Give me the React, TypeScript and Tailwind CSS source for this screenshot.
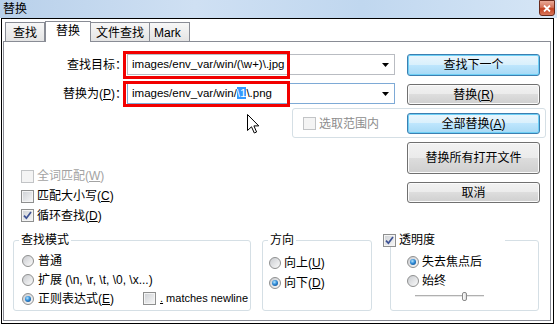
import React from "react";

function U({ children }: { children: React.ReactNode }) {
  return <span className="underline underline-offset-[1px]">{children}</span>;
}

function Check({ checked = false, disabled = false }: { checked?: boolean; disabled?: boolean }) {
  return (
    <span
      className={`flex h-[13px] w-[13px] shrink-0 items-center justify-center border ${
        disabled
          ? "border-[#c2c4c6] bg-[#f4f4f4]"
          : "border-[#8e8f8f] bg-[linear-gradient(135deg,#cdd0d4,#f8f8f8)] shadow-[inset_0_0_0_1px_#f4f4f4]"
      }`}
    >
      {checked && (
        <svg width="9" height="9" viewBox="0 0 9 9">
          <path d="M1 4.6 L3.4 7.2 L8 1" fill="none" stroke="#3d5294" strokeWidth="1.7" />
        </svg>
      )}
    </span>
  );
}

function Radio({ checked = false }: { checked?: boolean }) {
  return (
    <span className="flex h-[12px] w-[12px] shrink-0 items-center justify-center rounded-full border border-[#8e8f8f] bg-[linear-gradient(135deg,#c9cbcf,#fbfbfb)]">
      {checked && (
        <span className="h-[6px] w-[6px] rounded-full bg-[radial-gradient(circle_at_40%_35%,#b4e6ff_0%,#2f8ad6_45%,#0b3d77_100%)]" />
      )}
    </span>
  );
}

function Btn({
  blue = false,
  className = "",
  children,
}: {
  blue?: boolean;
  className?: string;
  children: React.ReactNode;
}) {
  return (
    <div
      className={`flex w-[133px] shrink-0 items-center justify-center whitespace-nowrap rounded-[3px] border ${
        blue
          ? "border-[#3c7fb1] bg-[linear-gradient(#eaf6fd_0%,#d9f0fc_49%,#bee6fd_50%,#a7d9f5_100%)] shadow-[inset_0_0_0_1px_#6fd0f6]"
          : "border-[#707070] bg-[linear-gradient(#f2f2f2_0%,#ebebeb_49%,#dddddd_50%,#cfcfcf_100%)] shadow-[inset_0_0_0_1px_#fbfbfb]"
      } ${className}`}
    >
      {children}
    </div>
  );
}

function Combo({ focused = false, children }: { focused?: boolean; children: React.ReactNode }) {
  return (
    <div
      className={`flex h-[21px] w-[268px] shrink-0 items-center border pl-[4px] pr-[5px] ${
        focused ? "border-[#7eaad6]" : "border-[#b9bcc2]"
      }`}
    >
      <span className="flex-1 whitespace-nowrap text-[11.5px]">{children}</span>
      <svg width="7" height="4" viewBox="0 0 7 4">
        <path d="M0 0h7L3.5 4z" fill="#000" />
      </svg>
    </div>
  );
}

function Group({ className = "", legend, children }: { className?: string; legend: React.ReactNode; children: React.ReactNode }) {
  return (
    <div className={`h-[71px] shrink-0 rounded-[3px] border border-[#d5dfe5] ${className}`}>
      {legend}
      {children}
    </div>
  );
}

export default function App() {
  return (
    <div className="h-[326px] w-[557px] overflow-hidden whitespace-nowrap bg-white font-['Liberation_Sans','Noto_Sans_CJK_SC',sans-serif] text-[12px] leading-none text-black [text-autospace:no-autospace]">
      {/* title bar */}
      <div className="flex h-[18px] items-start justify-between bg-[linear-gradient(90deg,#b8d0ea,#cfe0f3_35%,#c0d7ef_65%,#d6e6f6)] pl-[3px] pr-[2px]">
        <span className="mt-[3px] text-[12px] leading-[12px]">替换</span>
        <div className="flex h-[16px] w-[16px] items-center justify-center rounded-b-[3px] border border-[#6a2a1c] bg-[linear-gradient(#eaa896,#d4735a_45%,#c2401f_55%,#d9775c)]">
          <svg width="8" height="7" viewBox="0 0 8 7">
            <path d="M1 0.5 L7 6.5 M7 0.5 L1 6.5" stroke="#fff" strokeWidth="1.8" />
          </svg>
        </div>
      </div>

      {/* dialog body */}
      <div className="ml-[1px] flex h-[306px] w-[553px] flex-col border border-black">
        {/* tabs */}
        <div className="flex h-[22px] items-end pl-[3px]">
          <div className="flex h-[19px] w-[40px] items-center justify-center border border-b-0 border-[#898c95] bg-[linear-gradient(#f7f7f7,#e4e4e4)] pt-[1px]">
            查找
          </div>
          <div className="relative z-10 -mb-[1px] flex h-[21px] w-[46px] items-center justify-center border border-b-0 border-[#898c95] bg-white pb-[3px]">
            替换
          </div>
          <div className="flex h-[19px] w-[59px] items-center justify-center border border-b-0 border-l-0 border-[#898c95] bg-[linear-gradient(#f7f7f7,#e4e4e4)] pt-[1px]">
            文件查找
          </div>
          <div className="flex h-[19px] w-[40px] items-center justify-start border border-b-0 border-l-0 border-[#898c95] bg-[linear-gradient(#f7f7f7,#e4e4e4)] pl-[4px] pt-[1px] text-[12px]">
            Mark
          </div>
        </div>

        {/* tab panel */}
        <div className="relative mb-[2px] ml-[1px] mr-[2px] flex-1 border border-[#898c95] bg-white">
          <div className="mt-[12px] flex items-start">
            <div className="flex h-[21px] w-[123px] items-center justify-end">查找目标：</div>
            <Combo>images/env_var/win/(\w+)\.jpg</Combo>
            <Btn blue className="ml-[12px] h-[22px]">
              查找下一个
            </Btn>
          </div>

          <div className="mt-[7px] flex items-start">
            <div className="flex h-[21px] w-[123px] items-center justify-end">
              替换为(<U>P</U>)：
            </div>
            <Combo focused>
              images/env_var/win/<span className="bg-[#3399ff] text-white">\1</span>\.png
            </Combo>
            <Btn className="ml-[12px] mt-[1px] h-[21px]">
              替换(<U>R</U>)
            </Btn>
          </div>

          <div className="ml-[288px] mt-[3px] flex h-[30px] w-[254px] items-start rounded-[3px] border border-[#d5dfe5] pl-[10px] pr-[5px] pt-[3px]">
            <div className="mt-[5px] flex items-center gap-[3px] text-[#8d8d8d]">
              <Check disabled />
              选取范围内
            </div>
            <Btn blue className="ml-auto mt-[1px] h-[21px]">
              全部替换(<U>A</U>)
            </Btn>
          </div>

          <div className="flex">
            <div className="flex flex-col pl-[17px] pt-[28px]">
              <div className="flex h-[20px] items-center gap-[3px] text-[#a3a3a3]">
                <Check disabled />
                <span>
                  全词匹配(<U>W</U>)
                </span>
              </div>
              <div className="flex h-[20px] items-center gap-[3px]">
                <Check />
                <span>
                  匹配大小写(<U>C</U>)
                </span>
              </div>
              <div className="flex h-[19px] items-center gap-[3px]">
                <Check checked />
                <span>
                  循环查找(<U>D</U>)
                </span>
              </div>
            </div>
            <div className="ml-auto mr-[10px] flex flex-col pt-[4px]">
              <Btn className="h-[32px]">替换所有打开文件</Btn>
              <Btn className="mt-[8px] h-[21px]">取消</Btn>
            </div>
          </div>

          <div className="mt-[15px] flex pl-[9px]">
            <Group
              className="w-[238px]"
              legend={
                <div className="-mt-[8px] ml-[5px] flex h-[14px] w-fit items-center bg-white px-[2px]">查找模式</div>
              }
            >
              <div className="ml-[8px] mt-[4px] flex flex-col">
                <div className="flex h-[19px] items-center gap-[4px]">
                  <Radio />
                  普通
                </div>
                <div className="flex h-[19px] items-center gap-[4px]">
                  <Radio />
                  <span>扩展 (\n, \r, \t, \0, \x...)</span>
                </div>
                <div className="flex h-[19px] items-center">
                  <div className="flex w-[121px] shrink-0 items-center gap-[4px]">
                    <Radio checked />
                    <span>
                      正则表达式(<U>E</U>)
                    </span>
                  </div>
                  <div className="flex shrink-0 items-center gap-[4px]">
                    <Check />
                    <span className="whitespace-nowrap text-[11px]">
                      <U>.</U> matches newline
                    </span>
                  </div>
                </div>
              </div>
            </Group>

            <Group
              className="ml-[11px] w-[110px]"
              legend={<div className="-mt-[8px] ml-[5px] flex h-[14px] w-fit items-center bg-white px-[2px]">方向</div>}
            >
              <div className="ml-[6px] mt-[6px] flex flex-col">
                <div className="flex h-[20px] items-center gap-[3px]">
                  <Radio />
                  <span>
                    向上(<U>U</U>)
                  </span>
                </div>
                <div className="flex h-[20px] items-center gap-[3px]">
                  <Radio checked />
                  <span>
                    向下(<U>D</U>)
                  </span>
                </div>
              </div>
            </Group>

            <Group
              className="ml-[18px] w-[149px]"
              legend={
                <div className="-ml-[10px] -mt-[8px] flex h-[14px] w-[124px] items-center gap-[3px] bg-white px-[2px]">
                  <Check checked />
                  透明度
                </div>
              }
            >
              <div className="ml-[16px] mt-[5px] flex flex-col">
                <div className="flex h-[19px] items-center gap-[3px]">
                  <Radio checked />
                  失去焦点后
                </div>
                <div className="flex h-[19px] items-center gap-[3px]">
                  <Radio />
                  始终
                </div>
                <div className="relative ml-[8px] flex h-[12px] w-[69px] items-center">
                  <div className="h-[2px] w-full border-t border-[#b0b0b0] bg-[#e8e8e8]" />
                  <div className="absolute left-[47px] top-[2px] h-[9px] w-[5px] rounded-[2px] border border-[#8a8a8a] bg-[linear-gradient(90deg,#ffffff,#dcdcdc)]" />
                </div>
              </div>
            </Group>
          </div>

          {/* red annotation boxes */}
          <div className="absolute left-[119px] top-[9px] h-[28px] w-[167px] border-[3px] border-[#f20000]" />
          <div className="absolute left-[119px] top-[39px] h-[26px] w-[167px] border-[3px] border-[#f20000]" />

          {/* mouse cursor */}
          <svg className="absolute left-[243px] top-[72px]" width="13" height="20" viewBox="0 0 13 20">
            <path
              d="M0.5 0.5 L0.5 16.5 L4.5 12.8 L7.3 19 L9.6 18 L6.9 11.9 L11.8 11.9 Z"
              fill="#fff"
              stroke="#000"
              strokeWidth="1"
              strokeLinejoin="miter"
            />
          </svg>
        </div>
      </div>
    </div>
  );
}
